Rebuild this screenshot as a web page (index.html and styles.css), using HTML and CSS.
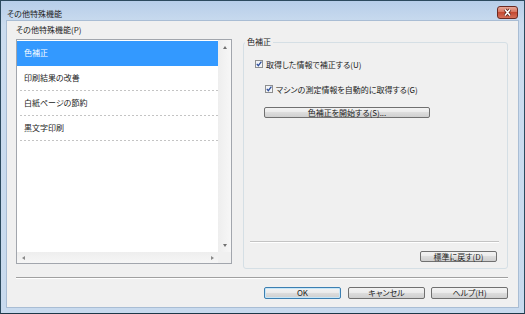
FILE: index.html
```html
<!DOCTYPE html>
<html lang="ja">

<head>
    <meta charset="UTF-8">
    <meta name="viewport" content="width=device-width, initial-scale=1.0">
    <link rel="stylesheet" href="styles.css">
</head>

<body>
    <div class="window">
        <div class="titlebar">
            <span class="title">その他特殊機能</span>
            <button class="close-btn" aria-label="閉じる">
                <svg width="11" height="9" viewBox="0 0 11 9">
                    <path d="M3 1.5 L8 7.5 M8 1.5 L3 7.5" stroke="#5c2219" stroke-width="3.2" />
                    <path d="M3 1.5 L8 7.5 M8 1.5 L3 7.5" stroke="#fff" stroke-width="1.6" />
                </svg>
            </button>
        </div>
        <div class="client">
            <div class="main">
                <div class="feature-panel">
                    <div class="list-label">その他特殊機能(P)</div>
                    <div class="listbox">
                        <div class="list-body">
                            <ul class="items">
                                <li class="item selected">色補正</li>
                                <li class="item">印刷結果の改善</li>
                                <li class="item">白紙ページの節約</li>
                                <li class="item">黒文字印刷</li>
                            </ul>
                            <div class="vscroll">
                                <span class="arrow up"></span>
                                <span class="arrow down"></span>
                            </div>
                        </div>
                        <div class="hscroll-row">
                            <div class="hscroll">
                                <span class="arrow left"></span>
                                <span class="arrow right"></span>
                            </div>
                            <div class="corner"></div>
                        </div>
                    </div>
                </div>
                <div class="group">
                    <span class="legend">色補正</span>
                    <label class="check first">
                        <span class="checkbox">
                            <svg width="8" height="8" viewBox="0 0 8 8">
                                <rect x="0.5" y="0.5" width="7" height="7" fill="#f2f4f7" stroke="#8e8f8f" />
                                <path d="M1.8 3.9 L3.3 5.7 L6.4 1.6" fill="none" stroke="#2f4f9c" stroke-width="1.3" />
                            </svg>
                        </span>
                        取得した情報で補正する(U)
                    </label>
                    <label class="check second">
                        <span class="checkbox">
                            <svg width="8" height="8" viewBox="0 0 8 8">
                                <rect x="0.5" y="0.5" width="7" height="7" fill="#f2f4f7" stroke="#8e8f8f" />
                                <path d="M1.8 3.9 L3.3 5.7 L6.4 1.6" fill="none" stroke="#2f4f9c" stroke-width="1.3" />
                            </svg>
                        </span>
                        マシンの測定情報を自動的に取得する(G)
                    </label>
                    <button class="btn start">色補正を開始する(S)...</button>
                    <div class="group-spacer"></div>
                    <div class="separator inner"></div>
                    <button class="btn reset">標準に戻す(D)</button>
                </div>
            </div>
            <div class="separator"></div>
            <div class="footer">
                <button class="btn default">OK</button>
                <button class="btn">キャンセル</button>
                <button class="btn">ヘルプ(H)</button>
            </div>
        </div>
    </div>
</body>

</html>
```

FILE: styles.css
```css
:root {
    --face-color: #f0f0f0;
    --frame-color: #c8daee;
    --border-color: #a2a6ad;
    --highlight-color: #3399ff;
    --group-border: #d5dfe5;
    --text-color: #222;
}

* {
    margin: 0;
    padding: 0;
    box-sizing: border-box;
}

body {
    font-family: "Noto Sans CJK JP", sans-serif;
    font-size: 8px;
    font-weight: 400;
    font-feature-settings: "palt";
    color: var(--text-color);
    background: #fff;
}

.window {
    width: 525px;
    height: 314px;
    display: flex;
    flex-direction: column;
    padding: 0 6px 6px;
    border: 1px solid #2c4a5e;
    border-bottom-color: #1d3848;
    background: linear-gradient(#b7cee9, #cbdcef 24px, var(--frame-color));
}

.titlebar {
    height: 20px;
    display: flex;
    justify-content: space-between;
    align-items: flex-start;
}

.title {
    margin-top: 6px;
    line-height: 13px;
}

.close-btn {
    margin-top: 5px;
    width: 21px;
    height: 13px;
    display: flex;
    align-items: center;
    justify-content: center;
    border: 1px solid #6b2a22;
    border-radius: 3px;
    background: linear-gradient(#e8a899, #d67560 45%, #c44a33 50%, #d4705a);
}

.client {
    width: 511px;
    height: 286px;
    padding: 0 10px 0 9px;
    background: var(--face-color);
    box-shadow: 0 0 0 1px #a9bdd4;
}

.main {
    display: flex;
    gap: 11px;
    height: 248px;
}

.feature-panel {
    width: 216px;
}

.list-label {
    margin: 3px 0 3px;
    line-height: 12px;
}

.listbox {
    height: 225px;
    display: flex;
    flex-direction: column;
    border: 1px solid var(--border-color);
    background: #fff;
}

.list-body {
    flex: 1;
    display: flex;
}

.items {
    flex: 1;
    list-style: none;
    padding-top: 1px;
}

.item {
    height: 25px;
    line-height: 24px;
    padding-left: 7px;
    background: repeating-linear-gradient(to right, #c4c4c4 0 2px, transparent 2px 4px) no-repeat left 3px bottom / calc(100% - 3px) 1px;
}

.item.selected {
    background: var(--highlight-color);
    color: #fff;
}

.vscroll {
    width: 13px;
    display: flex;
    flex-direction: column;
    align-items: center;
    justify-content: space-between;
    padding: 6px 0 5px;
    background: linear-gradient(to right, #eeeeee, #f7f7f7);
}

.hscroll-row {
    height: 11px;
    display: flex;
}

.hscroll {
    flex: 1;
    display: flex;
    align-items: center;
    justify-content: space-between;
    padding: 0 4px 0 5px;
    background: linear-gradient(#eeeeee, #f6f6f6);
}

.corner {
    width: 13px;
    background: var(--face-color);
}

.arrow {
    width: 0;
    height: 0;
    border: 2.5px solid transparent;
}

.arrow.up {
    border-top-width: 0;
    border-bottom: 3px solid #707070;
}

.arrow.down {
    border-bottom-width: 0;
    border-top: 3px solid #707070;
}

.arrow.left {
    border-left-width: 0;
    border-right: 3px solid #8a8a8a;
}

.arrow.right {
    border-right-width: 0;
    border-left: 3px solid #8a8a8a;
}

.group {
    width: 265px;
    height: 227px;
    margin-top: 21px;
    display: flex;
    flex-direction: column;
    align-items: flex-start;
    border: 1px solid var(--group-border);
    border-radius: 3px;
}

.legend {
    margin: -7px 0 0 1px;
    padding: 0 2px;
    line-height: 12px;
    background: var(--face-color);
}

.check {
    display: flex;
    align-items: center;
    gap: 3px;
    height: 12px;
}

.check.first {
    margin: 10px 0 0 11px;
}

.check.second {
    margin: 13px 0 0 21px;
}

.checkbox {
    display: flex;
}

.btn {
    font: inherit;
    height: 11px;
    padding: 0;
    line-height: 9px;
    color: var(--text-color);
    border: 1px solid #707070;
    border-radius: 2px;
    background: linear-gradient(#f3f3f3, #ebebeb 45%, #dddddd 50%, #cfcfcf);
}

.btn.start {
    width: 166px;
    margin: 12px 0 0 20px;
}

.group-spacer {
    flex: 1;
}

.separator {
    height: 2px;
    margin-top: 8px;
    border-top: 1px solid #a0a0a0;
    border-bottom: 1px solid #fff;
}

.separator.inner {
    width: 249px;
    margin: 0 0 0 6px;
    border-top-color: #c4c4c4;
}

.btn.reset {
    width: 77px;
    margin: 8px 10px 6px 0;
    align-self: flex-end;
}

.footer {
    display: flex;
    justify-content: flex-end;
    gap: 7px;
    margin-top: 8px;
}

.footer .btn {
    width: 77px;
    height: 12px;
    line-height: 10px;
}

.footer .btn:last-child {
    margin-left: -1px;
}

.btn.default {
    border-color: #3c7fb1;
    box-shadow: inset 0 0 0 1px #c6e6f8;
}
```
